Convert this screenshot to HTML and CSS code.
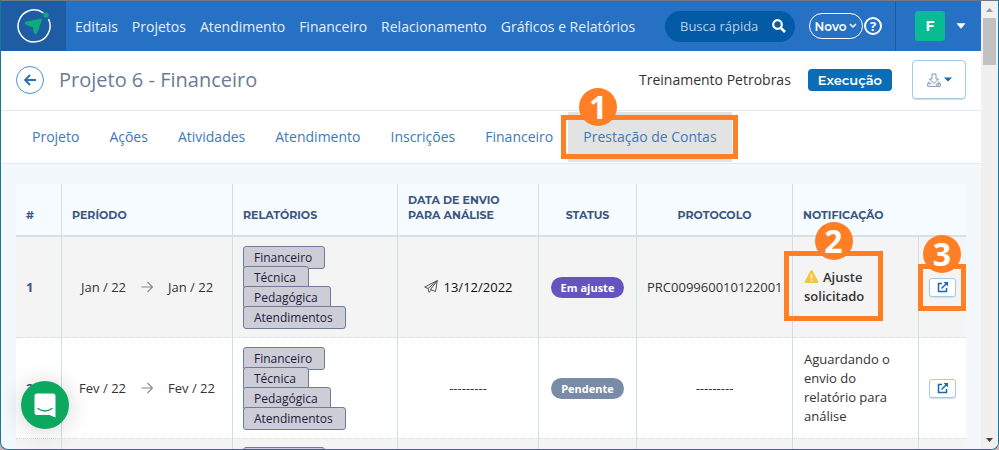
FILE: index.html
```html
<!DOCTYPE html>
<html lang="pt-BR">
<head>
<meta charset="utf-8">
<title>Projeto 6 - Financeiro</title>
<link rel="stylesheet" href="styles.css">
</head>
<body>
<svg class="defs" aria-hidden="true">
  <symbol id="arrow" viewBox="0 0 12 12"><path d="M0.500 6H11.500M6.500 1L11.500 6L6.500 11" fill="none" stroke="currentColor" stroke-width="1.100"/></symbol>
  <symbol id="external" viewBox="0 0 12 12"><path d="M5 2.500H1.500V10.500H9.500V7M4.500 7.500L10 2" fill="none" stroke="currentColor" stroke-width="1.500"/><path d="M6.500 1H11V5.500Z" fill="currentColor"/></symbol>
</svg>
<div class="window">
  <div class="page">
    <header class="topbar">
      <a class="logo" href="#" aria-label="Início">
        <svg width="36" height="36" viewBox="0 0 36 36"><path d="M27.500 5A16 16 0 1 0 32.500 11" fill="none" stroke="#fff" stroke-width="1.500"/><path d="M9 16Q8 14 10.500 13.500L24.500 10.800Q26 10.500 25.800 12L21.500 24.500Q20 27 18 25.500L16.800 19Q12 18.500 9 16Z" fill="#0bab7c"/><circle cx="30" cy="7" r="2.600" fill="#0bab7c"/></svg>
      </a>
      <nav class="mainnav">
        <a href="#">Editais</a><a href="#">Projetos</a><a href="#">Atendimento</a><a href="#">Financeiro</a><a href="#">Relacionamento</a><a href="#">Gráficos e Relatórios</a>
      </nav>
      <form class="search">
        <input type="search" placeholder="Busca rápida" aria-label="Busca rápida">
        <button type="button" aria-label="Buscar"><svg width="14" height="14" viewBox="0 0 14 14"><circle cx="5.500" cy="5.500" r="4.300" fill="none" stroke="#fff" stroke-width="2.200"/><path d="M8.800 8.800L13 13" stroke="#fff" stroke-width="2.600"/></svg></button>
      </form>
      <button class="novo" type="button">Novo<svg width="8" height="6" viewBox="0 0 8 6"><path d="M1 1L4 4L7 1" fill="none" stroke="#fff" stroke-width="1.500"/></svg></button>
      <button class="help" type="button" aria-label="Ajuda">?</button>
      <button class="user" type="button"><span class="avatar">F</span><svg width="10" height="6" viewBox="0 0 10 6"><path d="M0.500 0.300H9.500L5.500 5.300Q5 5.800 4.500 5.300Z" fill="#fff"/></svg></button>
    </header>

    <section class="titlebar">
      <a class="back" href="#" aria-label="Voltar"><svg width="12" height="12" viewBox="0 0 12 12"><path d="M12 6H1.500M6 1L1.200 6L6 11" fill="none" stroke="#2c73b5" stroke-width="2"/></svg></a>
      <h1>Projeto 6 - Financeiro</h1>
      <span class="org">Treinamento Petrobras</span>
      <span class="stage">Execução</span>
      <button class="download" type="button" aria-label="Baixar">
        <svg width="14" height="14" viewBox="0 0 14 14"><path d="M5 1H9V6H11.500L7 10.500L2.500 6H5ZM3 8.500L0.700 10.500V13.300H13.300V10.500L11 8.500M0.700 10.700H4.500M9.500 10.700H13.300M9 12H12" fill="none" stroke="#7d96c0"/></svg>
        <svg width="8" height="5" viewBox="0 0 8 5"><path d="M0 0.500H8L4 4.500Z" fill="#0969b7"/></svg>
      </button>
    </section>

    <nav class="tabs">
      <a href="#">Projeto</a><a href="#">Ações</a><a href="#">Atividades</a><a href="#">Atendimento</a><a href="#">Inscrições</a><a href="#">Financeiro</a>
      <a class="active" href="#">Prestação de Contas<span class="callout callout-tab"><b>1</b></span></a>
    </nav>

    <main>
      <table>
        <colgroup><col class="c-num"><col class="c-period"><col class="c-reports"><col class="c-date"><col class="c-status"><col class="c-protocol"><col><col class="c-open"></colgroup>
        <thead>
          <tr><th>#</th><th>Período</th><th>Relatórios</th><th>Data de envio para análise</th><th class="center">Status</th><th class="center">Protocolo</th><th colspan="2">Notificação</th></tr>
        </thead>
        <tbody>
          <tr>
            <td class="num">1</td>
            <td><div class="period"><span>Jan / 22</span><svg width="12" height="12"><use href="#arrow"/></svg><span>Jan / 22</span></div></td>
            <td><div class="tags"><span>Financeiro</span><span>Técnica</span><span>Pedagógica</span><span>Atendimentos</span></div></td>
            <td class="sent"><svg width="14" height="13" viewBox="0 0 14 13"><path d="M13.300 0.600L0.700 7L4 8.500L13.300 0.600L11.500 11.500L6.500 9.500L13.300 0.600M4 8.500L5 12.300L7.500 10" fill="none" stroke="#555"/></svg>13/12/2022</td>
            <td class="center"><span class="pill adjust">Em ajuste</span></td>
            <td class="protocol">PRC009960010122001</td>
            <td class="notice strong"><svg width="15" height="13" viewBox="0 0 14 13"><path d="M7 0Q7.600 0 8 0.800L13.800 11.500Q14.200 12.900 13 13H1Q-0.200 12.900 0.200 11.500L6 0.800Q6.400 0 7 0Z" fill="#f5c53d"/><path d="M7 4.500V8.500M7 9.800V11.300" stroke="#fff" stroke-width="1.500"/></svg>Ajuste solicitado<span class="callout callout-notice"><b>2</b></span></td>
            <td class="open"><button type="button" aria-label="Abrir"><svg width="12" height="12"><use href="#external"/></svg></button><span class="callout callout-open"><b>3</b></span></td>
          </tr>
          <tr>
            <td class="num">2</td>
            <td><div class="period"><span>Fev / 22</span><svg width="12" height="12"><use href="#arrow"/></svg><span>Fev / 22</span></div></td>
            <td><div class="tags"><span>Financeiro</span><span>Técnica</span><span>Pedagógica</span><span>Atendimentos</span></div></td>
            <td class="center">---------</td>
            <td class="center"><span class="pill pending">Pendente</span></td>
            <td class="center">---------</td>
            <td class="notice">Aguardando o envio do relatório para análise</td>
            <td class="open"><button type="button" aria-label="Abrir"><svg width="12" height="12"><use href="#external"/></svg></button></td>
          </tr>
          <tr>
            <td></td><td></td>
            <td><div class="tags"><span>Financeiro</span></div></td>
            <td></td><td></td><td></td><td></td><td></td>
          </tr>
        </tbody>
      </table>
    </main>
  </div>
  <div class="scrollbar" aria-hidden="true">
    <svg width="17" height="17" viewBox="0 0 17 17"><path d="M5 11L8.500 7L12 11Z" fill="#999"/></svg>
    <div class="thumb"></div>
    <svg class="down" width="17" height="17" viewBox="0 0 17 17"><path d="M5 6H12L8.500 10Z" fill="#444"/></svg>
  </div>
  <button class="chat" type="button" aria-label="Abrir chat"><svg width="22" height="25" viewBox="0 0 22 25"><path d="M3 0.500H19Q21.500 0.500 21.500 3V24.500L15.500 22H3Q0.500 22 0.500 19.500V3Q0.500 0.500 3 0.500Z" fill="#fff"/><path d="M4 15.500Q11 20.500 18 15.500" fill="none" stroke="#0ca85f" stroke-width="1.500" stroke-linecap="round"/></svg></button>
</div>
</body>
</html>
```
FILE: styles.css
```css
* { box-sizing: border-box; }
body { margin: 0; background: #c9b1b0; font-family: "Open Sans", sans-serif; font-size: 13px; line-height: 19px; color: #333; }
a { text-decoration: none; color: inherit; }
button { font: inherit; padding: 0; border: 0; background: none; color: inherit; }
svg { flex: none; }
.defs { position: absolute; width: 0; height: 0; }

.window { position: relative; display: flex; height: 100vh; overflow: hidden; border: 1px solid #1f7396; border-top-color: #70797f; border-radius: 0 0 8px 8px; background: #f3f8fc; }
.page { flex: 1; min-width: 0; }

.topbar { display: flex; align-items: center; height: 50px; background: #2671c3; color: #fff; }
.logo { display: flex; align-items: center; justify-content: center; width: 65px; height: 50px; background: #1e5da3; }
.mainnav { display: flex; gap: 14px; margin: 0 auto 0 9px; font-size: 14px; font-weight: 500; color: #e6eef8; white-space: nowrap; }
.search { display: flex; align-items: center; width: 130px; height: 31px; margin-right: 14px; padding: 0 9px 0 15px; border-radius: 16px; background: #035ba6; }
.search input { flex: 1; min-width: 0; padding: 0; border: 0; outline: 0; background: none; font: inherit; color: #fff; }
.search input::placeholder { color: #b8cfe5; opacity: 1; }
.search button { display: flex; }
.novo { display: flex; align-items: center; justify-content: center; gap: 3px; width: 54px; height: 26px; border: 1px solid #fff; border-radius: 13px; font-family: "Montserrat", "Inter", sans-serif; font-size: 12px; font-weight: 600; }
.help { width: 18px; height: 18px; margin: 0 13px 0 1px; border: 2px solid #fff; border-radius: 50%; font-size: 13px; line-height: 14px; font-weight: 700; }
.user { display: flex; align-items: center; gap: 11px; height: 50px; padding: 0 15px 0 19px; border-left: 1px solid #1a5a9f; }
.avatar { width: 30px; height: 30px; border-radius: 3px; background: #08bb93; font-family: "Montserrat", "Inter", sans-serif; font-size: 14px; line-height: 30px; font-weight: 700; }

.titlebar { display: flex; align-items: center; height: 60px; padding: 0 15px 2px; border-bottom: 1px solid #dfebf1; background: #fff; }
.back { display: flex; align-items: center; justify-content: center; width: 28px; height: 28px; border: 1px solid #4b90d4; border-radius: 50%; }
h1 { margin: 0 auto 0 15px; font-size: 20px; line-height: 28px; font-weight: 400; color: #6b7c93; }
.org { margin-right: 17px; font-size: 14px; }
.stage { height: 22px; margin-right: 20px; padding: 0 10px; border-radius: 4px; background: #096db8; color: #fff; font-family: "Montserrat", "Inter", sans-serif; font-size: 13px; line-height: 22px; font-weight: 600; }
.download { display: flex; align-items: center; justify-content: center; gap: 3px; width: 54px; height: 39px; border: 1px solid #a5cbe6; border-radius: 4px; background: #fff; box-shadow: 0 1px 1px #cfdde8; }

.tabs { display: flex; height: 53px; padding: 1px 16px; border-bottom: 1px solid #dfebf1; background: #fff; font-size: 14px; line-height: 50px; color: #3d7ab8; }
.tabs a { padding: 0 15px; white-space: nowrap; }
.tabs .active { position: relative; background: #e3e3e3; }

main { padding: 20px 15px; }
table { width: 100%; table-layout: fixed; border-collapse: separate; border-spacing: 0; }
.c-num { width: 46px; }
.c-period { width: 171px; }
.c-reports { width: 165px; }
.c-date { width: 141px; }
.c-status { width: 98px; }
.c-protocol { width: 156px; }
.c-open { width: 47px; }
th, td { border-right: 1px solid #d3dee1; text-align: left; }
th:last-child, td:last-child { border-right: 0; }
th { height: 53px; padding: 9px 10px 12px; border-bottom: 2px solid #d7e2e4; background: #f5fbff; font-family: "Montserrat", "Inter", sans-serif; font-size: 11px; line-height: 15px; font-weight: 700; color: #3d5681; text-transform: uppercase; vertical-align: bottom; }
td { height: 101px; padding: 8px 10px; border-bottom: 1px dotted #cfdadd; background: #fff; }
tbody tr:nth-child(odd) td { background: #f4f4f4; }
tbody tr:last-child td { vertical-align: top; }
th.center, td.center { text-align: center; }
.num { font-weight: 700; color: #3d5681; }
.period { display: flex; align-items: center; justify-content: center; gap: 15px; }
.period svg { color: #888; }
.tags { display: flex; flex-direction: column; align-items: flex-start; }
.tags span { height: 23px; padding: 0 12px 0 10px; border: 1px solid #6b7d9a; border-radius: 3px; background: #cdcdd7; color: #1c1c3c; font-size: 12px; line-height: 22px; font-weight: 500; }
.tags span + span { margin-top: -3px; }
.sent { text-align: center; color: #111; white-space: nowrap; }
.sent svg { margin-right: 6px; vertical-align: -1px; }
.pill { display: inline-block; height: 21px; padding: 0 10px; border-radius: 11px; color: #fff; font-size: 11px; line-height: 21px; font-weight: 700; }
.adjust { background: #6554c0; }
.pending { background: #7a8ba8; }
.protocol { white-space: nowrap; }
td.notice { position: relative; padding-left: 11px; }
.strong { font-weight: 600; }
.notice svg { margin-right: 4px; vertical-align: -1px; }
.open { position: relative; }
.open button { display: flex; align-items: center; justify-content: center; width: 27px; height: 19px; border: 1px solid #a5cbe6; border-radius: 3px; background: #fff; color: #1d68b0; box-shadow: 0 1px 1px #cfdde8; }

.callout { position: absolute; border: 5px solid #ff7f27; }
.callout b { position: absolute; top: -34px; left: 50%; width: 38px; height: 38px; margin-left: -19px; border-radius: 50%; background: #ff7f27; color: #fff; font-size: 32px; line-height: 38px; font-weight: 700; text-align: center; }
.callout-tab { inset: 3px -6px 3px -7px; }
.callout-tab b { left: 32px; top: -32px; }
.callout-notice { top: 14px; left: -9px; width: 99px; height: 70px; }
.callout-open { top: 27px; left: -1px; right: 0; height: 47px; }

.scrollbar { display: flex; flex-direction: column; width: 17px; background: #f0f0f0; }
.thumb { width: 13px; height: 47px; margin: 0 2px; background: #c1c1c1; }
.scrollbar .down { margin-top: auto; }
.chat { position: absolute; left: 20px; bottom: 20px; display: flex; align-items: center; justify-content: center; width: 48px; height: 48px; border-radius: 50%; background: #0ca85f; box-shadow: 0 2px 24px rgba(0, 0, 0, 0.18); }
```
